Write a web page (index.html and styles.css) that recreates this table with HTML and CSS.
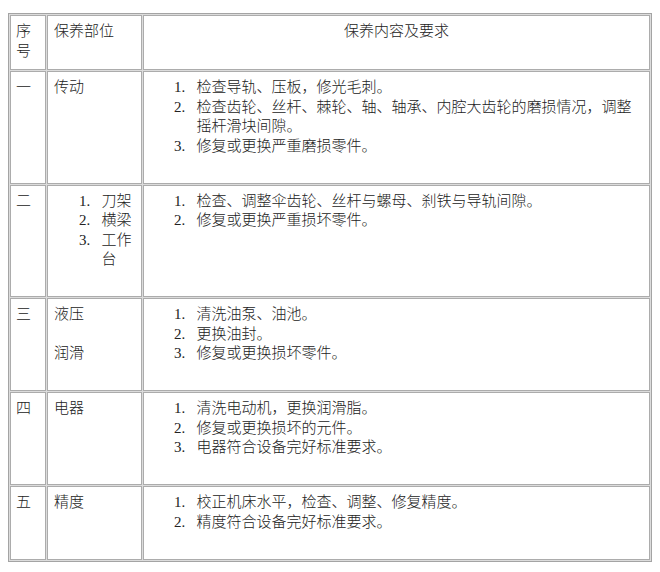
FILE: index.html
```html
<!DOCTYPE html>
<html lang="zh-CN">
<head>
<meta charset="utf-8">
<title>保养内容及要求</title>
<link rel="stylesheet" href="styles.css">
</head>
<body>
<table class="grid">
  <tr class="head">
    <td class="c1">序号</td>
    <td class="c2">保养部位</td>
    <td class="c3 center">保养内容及要求</td>
  </tr>
  <tr>
    <td class="c1">一</td>
    <td class="c2">传动</td>
    <td class="c3">
      <ol class="items">
        <li><span>检查导轨、压板，修光毛刺。</span></li>
        <li><span>检查齿轮、丝杆、棘轮、轴、轴承、内腔大齿轮的磨损情况，调整摇杆滑块间隙。</span></li>
        <li><span>修复或更换严重磨损零件。</span></li>
      </ol>
    </td>
  </tr>
  <tr>
    <td class="c1">二</td>
    <td class="c2">
      <ol class="items">
        <li><span>刀架</span></li>
        <li><span>横梁</span></li>
        <li><span>工作台</span></li>
      </ol>
    </td>
    <td class="c3">
      <ol class="items">
        <li><span>检查、调整伞齿轮、丝杆与螺母、刹铁与导轨间隙。</span></li>
        <li><span>修复或更换严重损坏零件。</span></li>
      </ol>
    </td>
  </tr>
  <tr>
    <td class="c1">三</td>
    <td class="c2">
      <p class="para">液压</p>
      <p class="para gap">润滑</p>
    </td>
    <td class="c3">
      <ol class="items">
        <li><span>清洗油泵、油池。</span></li>
        <li><span>更换油封。</span></li>
        <li><span>修复或更换损坏零件。</span></li>
      </ol>
    </td>
  </tr>
  <tr>
    <td class="c1">四</td>
    <td class="c2">电器</td>
    <td class="c3">
      <ol class="items">
        <li><span>清洗电动机，更换润滑脂。</span></li>
        <li><span>修复或更换损坏的元件。</span></li>
        <li><span>电器符合设备完好标准要求。</span></li>
      </ol>
    </td>
  </tr>
  <tr>
    <td class="c1">五</td>
    <td class="c2">精度</td>
    <td class="c3">
      <ol class="items">
        <li><span>校正机床水平，检查、调整、修复精度。</span></li>
        <li><span>精度符合设备完好标准要求。</span></li>
      </ol>
    </td>
  </tr>
</table>
</body>
</html>
```

FILE: styles.css
```css
html {
  background: #ffffff;
}

body {
  margin: 8px;
  font-family: "Liberation Serif", "Noto Sans CJK SC", serif;
  font-size: 15px;
  line-height: 19.5px;
  color: #222222;
  font-weight: 300;
}

.grid {
  width: 100%;
  margin-top: 5px;
  table-layout: fixed;
  border-collapse: separate;
  border-spacing: 1px;
  border: 1px solid #a4a4a4;
  background: #dcdcdc;
}

.grid td {
  box-sizing: border-box;
  background: #ffffff;
  border: 1px solid #acacac;
  padding: 6px 5px 8px 5px;
  vertical-align: top;
}

.grid .c1 {
  width: 36px;
}

.grid .c2 {
  width: 95px;
  padding-left: 6px;
}

.center {
  text-align: center;
}

.items {
  list-style: none;
  margin: 0 0 18.5px 0;
  padding: 0 0 0 25px;
  counter-reset: n;
}

.items li {
  display: grid;
  grid-template-columns: 22.5px 1fr;
  counter-increment: n;
}

.items li::before {
  content: counter(n) ".";
}

.para {
  margin: 0;
}

.para.gap {
  margin-top: 19px;
}
```
